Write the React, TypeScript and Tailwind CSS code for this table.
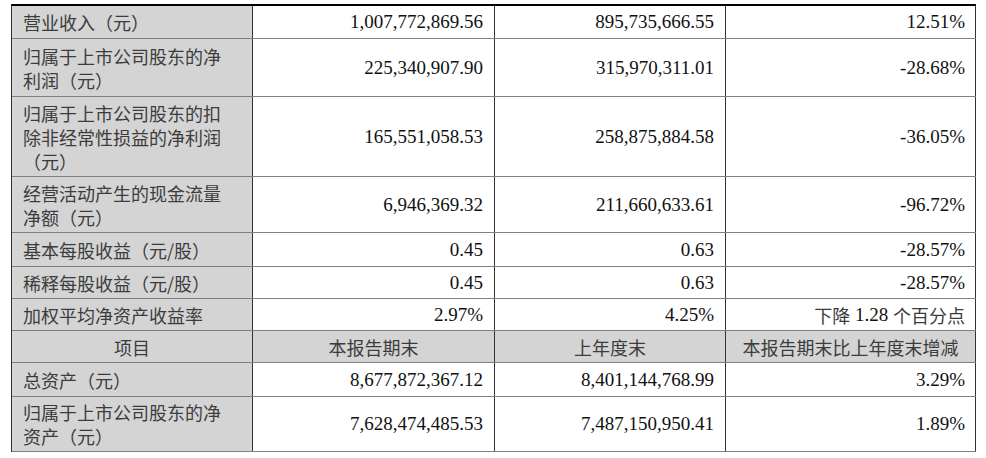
import type { ReactNode } from 'react';

type Row = {
  label: string[];
  cur: string;
  prev: string;
  change: ReactNode;
  h: string;
  header?: boolean;
};

const cjk = "font-['Noto_Sans_CJK_SC',sans-serif] text-[18px] leading-[24px] text-[#3c3c3c]";
const num = "font-['Liberation_Serif','Noto_Sans_CJK_SC',serif] text-[19px] leading-[24px] text-[#111]";

const rows: Row[] = [
  { label: ['营业收入（元）'], cur: '1,007,772,869.56', prev: '895,735,666.55', change: '12.51%', h: 'h-[33px]' },
  { label: ['归属于上市公司股东的净', '利润（元）'], cur: '225,340,907.90', prev: '315,970,311.01', change: '-28.68%', h: 'h-[58px]' },
  { label: ['归属于上市公司股东的扣', '除非经常性损益的净利润', '（元）'], cur: '165,551,058.53', prev: '258,875,884.58', change: '-36.05%', h: 'h-[80px]' },
  { label: ['经营活动产生的现金流量', '净额（元）'], cur: '6,946,369.32', prev: '211,660,633.61', change: '-96.72%', h: 'h-[56px]' },
  { label: ['基本每股收益（元/股）'], cur: '0.45', prev: '0.63', change: '-28.57%', h: 'h-[34px]' },
  { label: ['稀释每股收益（元/股）'], cur: '0.45', prev: '0.63', change: '-28.57%', h: 'h-[32px]' },
  {
    label: ['加权平均净资产收益率'],
    cur: '2.97%',
    prev: '4.25%',
    change: (
      <>
        <span className={cjk}>下降</span> 1.28 <span className={cjk}>个百分点</span>
      </>
    ),
    h: 'h-[32px]',
  },
  { label: ['项目'], cur: '本报告期末', prev: '上年度末', change: '本报告期末比上年度末增减', h: 'h-[32px]', header: true },
  { label: ['总资产（元）'], cur: '8,677,872,367.12', prev: '8,401,144,768.99', change: '3.29%', h: 'h-[34px]' },
  { label: ['归属于上市公司股东的净', '资产（元）'], cur: '7,628,474,485.53', prev: '7,487,150,950.41', change: '1.89%', h: 'h-[55px]' },
];

export default function App() {
  return (
    <div className="w-[986px] h-[458px] bg-white pt-[4px] pl-[11px] overflow-hidden">
      <div className="w-[965px] border-t-2 border-black border-l border-l-[#333]">
        {rows.map((r, i) =>
          r.header ? (
            <div key={i} className={`grid grid-cols-[241px_242px_231px_250px] ${r.h} border-b border-[#808080] bg-[#d4d4d4]`}>
              {[r.label[0], r.cur, r.prev, r.change].map((t, j) => (
                <div key={j} className={`flex items-center justify-center border-r border-[#333] ${cjk}`}>
                  {t}
                </div>
              ))}
            </div>
          ) : (
            <div key={i} className={`grid grid-cols-[241px_242px_231px_250px] ${r.h} border-b border-[#808080]`}>
              <div className={`flex flex-col justify-center pl-[11px] bg-[#d4d4d4] border-r border-[#333] ${cjk}`}>
                {r.label.map((l, k) => (
                  <div key={k}>{l}</div>
                ))}
              </div>
              <div className={`flex items-center justify-end pr-[11px] border-r border-[#333] ${num}`}>{r.cur}</div>
              <div className={`flex items-center justify-end pr-[11px] border-r border-[#333] ${num}`}>{r.prev}</div>
              <div className={`flex items-center justify-end pr-[10px] border-r border-[#333] whitespace-pre ${num}`}>
                {r.change}
              </div>
            </div>
          )
        )}
      </div>
    </div>
  );
}
